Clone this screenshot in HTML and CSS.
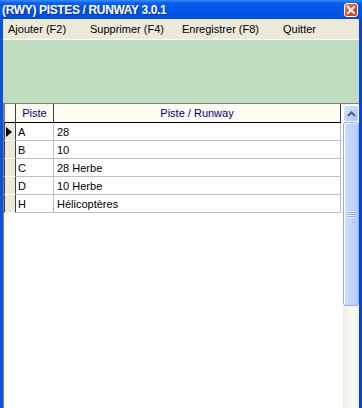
FILE: index.html
```html
<!DOCTYPE html>
<html lang="fr">
<head>
    <meta charset="UTF-8">
    <meta name="viewport" content="width=device-width, initial-scale=1.0">
    <title>(RWY) PISTES / RUNWAY 3.0.1</title>
    <link rel="stylesheet" href="styles.css">
</head>
<body>
    <div class="window">
        <div class="titlebar">
            <span class="title">(RWY) PISTES / RUNWAY 3.0.1</span>
            <span class="close">
                <svg width="14" height="14" viewBox="0 0 14 14">
                    <defs>
                        <linearGradient id="closeBg" x1="0" y1="0" x2="1" y2="1">
                            <stop offset="0" stop-color="#EE9A7C"/>
                            <stop offset="0.4" stop-color="#E0542F"/>
                            <stop offset="1" stop-color="#C23A17"/>
                        </linearGradient>
                    </defs>
                    <rect x="0.5" y="0.5" width="13" height="13" rx="2.5" fill="url(#closeBg)" stroke="#fff"/>
                    <path d="M4 4 L10 10 M10 4 L4 10" stroke="#fff" stroke-width="2" stroke-linecap="square"/>
                </svg>
            </span>
        </div>

        <div class="client">
            <div class="menubar">
                <span>Ajouter (F2)</span>
                <span>Supprimer (F4)</span>
                <span>Enregistrer (F8)</span>
                <span>Quitter</span>
            </div>

            <div class="panel"></div>

            <div class="grid">
                <div class="table">
                    <div class="row head">
                        <div class="ind"></div>
                        <div class="c1">Piste</div>
                        <div class="c2">Piste / Runway</div>
                    </div>
                    <div class="row">
                        <div class="ind">
                            <svg width="6" height="10" viewBox="0 0 6 10"><path d="M0 0 L6 5 L0 10 Z" fill="#000"/></svg>
                        </div>
                        <div class="c1">A</div>
                        <div class="c2">28</div>
                    </div>
                    <div class="row">
                        <div class="ind"></div>
                        <div class="c1">B</div>
                        <div class="c2">10</div>
                    </div>
                    <div class="row">
                        <div class="ind"></div>
                        <div class="c1">C</div>
                        <div class="c2">28 Herbe</div>
                    </div>
                    <div class="row">
                        <div class="ind"></div>
                        <div class="c1">D</div>
                        <div class="c2">10 Herbe</div>
                    </div>
                    <div class="row">
                        <div class="ind"></div>
                        <div class="c1">H</div>
                        <div class="c2">Hélicoptères</div>
                    </div>
                </div>

                <div class="scrollbar">
                    <div class="sb-up">
                        <svg width="9" height="6" viewBox="0 0 9 6"><path d="M1 5 L4.5 1.5 L8 5" fill="none" stroke="#4D6185" stroke-width="2"/></svg>
                    </div>
                    <div class="sb-thumb">
                        <div class="grip"></div>
                    </div>
                    <div class="sb-track"></div>
                </div>
            </div>
        </div>
    </div>
</body>
</html>
```

FILE: styles.css
```css
body {
    margin: 0;
    width: 362px;
    height: 408px;
    overflow: hidden;
    font-family: "Liberation Sans", Arial, sans-serif;
    font-size: 11px;
    color: #000;
}

.window {
    height: 408px;
    display: flex;
    flex-direction: column;
}

/* barre de titre XP */
.titlebar {
    height: 19px;
    flex: none;
    display: flex;
    align-items: center;
    justify-content: space-between;
    padding: 0 4px 0 2px;
    background: linear-gradient(#3C8CF8 0, #0A5EEC 3px, #0055E5 50%, #004FDC 100%);
    color: #fff;
}

.title {
    font-weight: bold;
    font-size: 12px;
    letter-spacing: -0.35px;
    text-shadow: 1px 1px 0 #0A2F9A;
}

.close {
    display: flex;
    margin-top: 1px;
}

.client {
    flex: 1;
    min-height: 0;
    display: flex;
    flex-direction: column;
    background: #ECE9D8;
    border-left: 3px solid #0A52DF;
    border-right: 3px solid #0746D2;
}

.menubar {
    height: 20px;
    flex: none;
    display: grid;
    grid-template-columns: 82px 92px 101px auto;
    align-items: center;
    padding-left: 5px;
    border-bottom: 1px solid #fff;
}

.panel {
    height: 63px;
    flex: none;
    background: #C0DCC0;
}

.grid {
    flex: 1;
    min-height: 0;
    display: flex;
    background: #fff;
    border-top: 1px solid #808080;
    border-left: 1px solid #808080;
}

.table {
    width: 337px;
    margin-right: 2px;
}

.row {
    display: grid;
    grid-template-columns: 12px 38px 287px;
    height: 18px;
}

.row > div {
    display: flex;
    align-items: center;
    border-right: 1px solid #C0C0C0;
    border-bottom: 1px solid #C0C0C0;
    white-space: nowrap;
}

.row .ind {
    background: #ECE9D8;
    border-left: 1px solid #404040;
    border-right: 1px solid #404040;
    border-bottom: 1px solid #fff;
    padding-left: 1px;
}

.row .c1 {
    padding-left: 2px;
}

.row .c2 {
    padding-left: 3px;
}

.row.head {
    height: 19px;
}

.row.head > div {
    background: #FFFBF0;
    color: #000080;
    justify-content: center;
    padding-left: 0;
    border-right: 1px solid #404040;
    border-bottom: 1px solid #000;
}

.row.head .ind {
    border-left: 1px solid #808080;
}

/* barre de défilement */
.scrollbar {
    width: 16px;
    display: flex;
    flex-direction: column;
    background: linear-gradient(90deg, #EEEDE5, #FBFBF8 60%, #F3F1EA);
}

.sb-up {
    height: 17px;
    margin-top: 1px;
    flex: none;
    display: flex;
    align-items: center;
    justify-content: center;
    box-sizing: border-box;
    border: 1px solid #fff;
    border-radius: 3px;
    background: linear-gradient(135deg, #D9E5FE, #BCD0FA 60%, #AFC6F7);
}

.sb-thumb {
    height: 184px;
    flex: none;
    display: flex;
    align-items: center;
    justify-content: center;
    box-sizing: border-box;
    border: 1px solid #8FAEF0;
    border-radius: 3px;
    background: linear-gradient(90deg, #D2E0FD, #C1D4FC 50%, #B4CAF9);
    box-shadow: inset 1px 1px 0 #fff;
}

.grip {
    width: 7px;
    height: 7px;
    background: repeating-linear-gradient(#EEF4FF 0, #EEF4FF 1px, #8CA8E6 1px, #8CA8E6 2px);
}

.sb-track {
    flex: 1;
}
```
